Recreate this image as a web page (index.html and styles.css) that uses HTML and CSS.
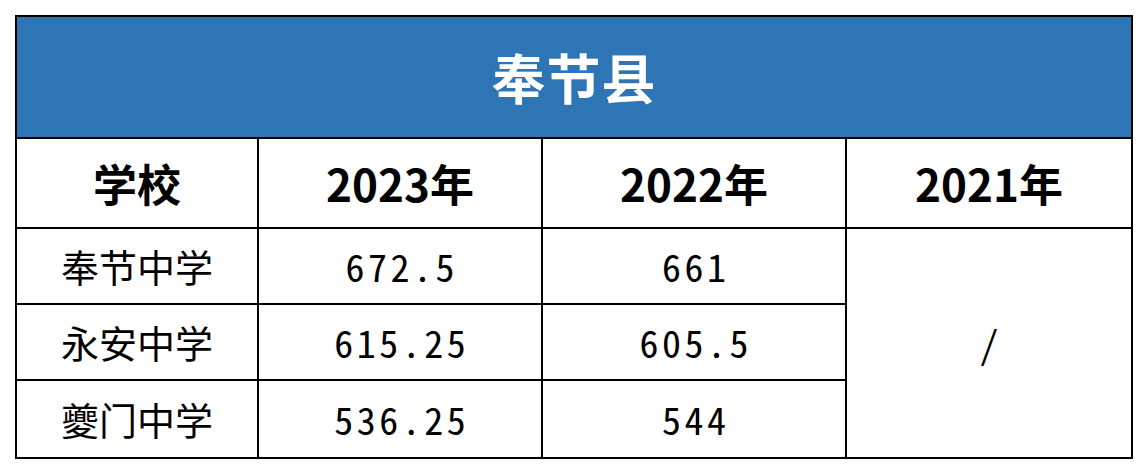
FILE: index.html
```html
<!DOCTYPE html>
<html lang="zh-CN">
<head>
<meta charset="utf-8">
<title>奉节县</title>
<link rel="stylesheet" href="styles.css">
</head>
<body>
<div class="sheet">
  <div class="cell title">奉节县</div>
  <div class="cell head">学校</div>
  <div class="cell head">2023年</div>
  <div class="cell head">2022年</div>
  <div class="cell head">2021年</div>

  <div class="cell name">奉节中学</div>
  <div class="cell num">672.5</div>
  <div class="cell num">661</div>
  <div class="cell num merged">/</div>

  <div class="cell name">永安中学</div>
  <div class="cell num">615.25</div>
  <div class="cell num">605.5</div>

  <div class="cell name">夔门中学</div>
  <div class="cell num">536.25</div>
  <div class="cell num">544</div>
</div>
</body>
</html>
```
FILE: styles.css
```css
html, body {
  margin: 0;
  padding: 0;
  background: #ffffff;
}
body {
  padding: 15px 0 0 15px;
  font-family: "Noto Sans CJK SC", "Noto Sans", sans-serif;
}
.sheet {
  display: grid;
  width: 1118px;
  box-sizing: border-box;
  grid-template-columns: 240px 282px 302px 284px;
  grid-template-rows: 120px 88px 74px 74px 76px;
  gap: 2px;
  padding: 2px;
  background: #000000;
}
.cell {
  background: #ffffff;
  display: flex;
  align-items: center;
  justify-content: center;
  color: #000000;
  line-height: 1;
}
.title {
  grid-column: 1 / 5;
  background: #2e75b6;
  color: #ffffff;
  font-size: 54px;
  font-weight: 700;
  letter-spacing: 1px;
}
.head {
  font-size: 44px;
  font-weight: 700;
}
.name {
  font-size: 38px;
}
.num {
  font-family: "Noto Sans Mono CJK SC", "DejaVu Sans Mono", monospace;
  font-size: 38px;
  letter-spacing: 3.5px;
  padding-left: 3.5px;
}
.merged {
  grid-column: 4;
  grid-row: 3 / 6;
  letter-spacing: 0;
  padding-left: 0;
}
```
